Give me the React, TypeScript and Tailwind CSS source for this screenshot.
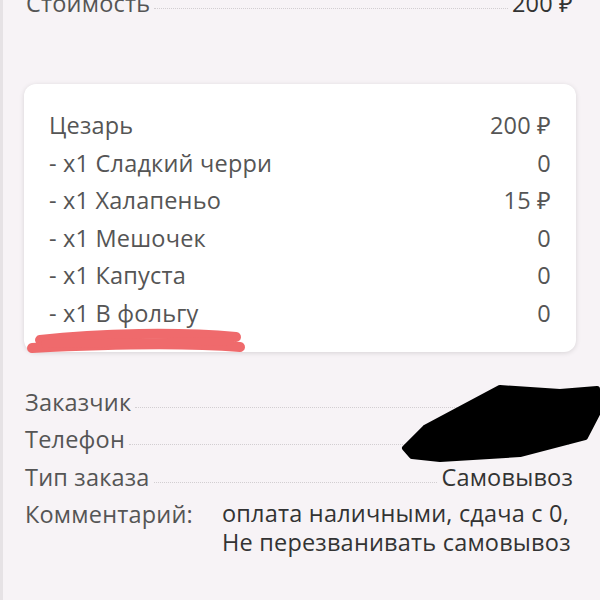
import React from "react";

const items = [
  { name: "Цезарь", price: "200 ₽" },
  { name: "- x1 Сладкий черри", price: "0" },
  { name: "- x1 Халапеньо", price: "15 ₽" },
  { name: "- x1 Мешочек", price: "0" },
  { name: "- x1 Капуста", price: "0" },
  { name: "- x1 В фольгу", price: "0" },
];

function InfoRow({ label, value }: { label: string; value: string }) {
  return (
    <div className="flex items-baseline">
      <span className="text-[#555]">{label}</span>
      <span className="mx-[4px] flex-1 border-b border-dotted border-[#d2ced1] translate-y-[-3px]" />
      <span className="text-[#333]">{value}</span>
    </div>
  );
}

export default function App() {
  return (
    <div
      className="relative h-[600px] w-[600px] overflow-hidden bg-[#f7f3f6] text-[23.5px] leading-[30px] tracking-[0.2px]"
      style={{ fontFamily: '"Open Sans", "Noto Sans", sans-serif' }}
    >
      <div className="absolute left-0 top-0 h-full w-[3px] bg-[#e6e2e5]" />

      <div className="-mt-[12px] pl-[26px] pr-[27px]">
        <InfoRow label="Стоимость" value="200 ₽" />
      </div>

      <div className="mx-[24px] mt-[66px] rounded-[12px] bg-white px-[25px] pb-[24px] pt-[26px] shadow-[0_1px_5px_rgba(0,0,0,0.13)]">
        <div className="flex flex-col gap-[7.5px] text-[#555]">
          {items.map((item) => (
            <div key={item.name} className="flex justify-between">
              <span>{item.name}</span>
              <span>{item.price}</span>
            </div>
          ))}
        </div>
      </div>

      <div className="mt-[35px] flex flex-col gap-[7.5px] pl-[25px] pr-[27px]">
        <InfoRow label="Заказчик" value="" />
        <InfoRow label="Телефон" value="" />
        <InfoRow label="Тип заказа" value="Самовывоз" />
        <div className="flex">
          <span className="w-[197px] shrink-0 text-[#555]">Комментарий:</span>
          <div className="text-[#333] leading-[29px]">
            <div>оплата наличными, сдача с 0,</div>
            <div>Не перезванивать самовывоз</div>
          </div>
        </div>
      </div>

      {/* marker scribbles over the screenshot */}
      <svg className="absolute left-0 top-0" width="600" height="600" viewBox="0 0 600 600">
        <g stroke="#ef6a6c" strokeLinecap="round" fill="none">
          <path d="M40 340 C 100 333, 180 332, 236 337" strokeWidth="10" />
          <path d="M32 348 C 110 344, 190 343, 240 347" strokeWidth="10" />
          <path d="M45 344 L 230 341" strokeWidth="8" />
        </g>
        <path
          d="M405 448 L 425 428 L 500 388 L 560 392 L 597 389 L 598 412 L 585 437 L 520 454 L 440 459 L 412 456 Z"
          fill="#000"
          stroke="#000"
          strokeWidth="6"
          strokeLinejoin="round"
        />
      </svg>
    </div>
  );
}
